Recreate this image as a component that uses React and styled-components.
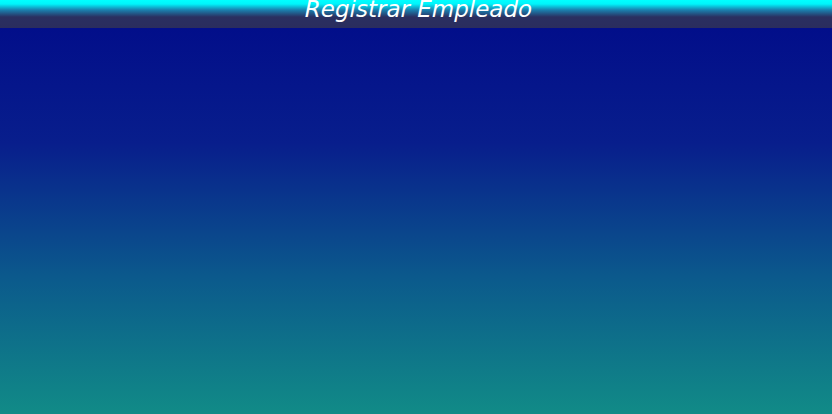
import React from 'react';
import styled, { createGlobalStyle } from 'styled-components';

const GlobalStyle = createGlobalStyle`
  html, body {
    margin: 0;
    padding: 0;
    height: 100%;
  }
  #root {
    height: 100%;
  }
`;

function App() {
  return (
    <>
      <GlobalStyle />
      <Page>
        <Header>
          <Title>Registrar Empleado</Title>
        </Header>
        <Content />
      </Page>
    </>
  );
}

const Page = styled.div`
  display: flex;
  flex-direction: column;
  height: 100vh;
  font-family: 'DejaVu Sans', sans-serif;
`;

const Header = styled.header`
  height: 28px;
  display: flex;
  justify-content: center;
  align-items: flex-start;
  overflow: hidden;
  background: linear-gradient(
    to bottom,
    #00ffff 0px,
    #00f4fb 4px,
    #1a7fae 10px,
    #2a2f60 17px,
    #2a2d5e 28px
  );
`;

const Title = styled.h1`
  margin: 0;
  margin-top: -5px;
  padding-left: 5px;
  font-size: 23px;
  font-weight: normal;
  font-style: italic;
  letter-spacing: 0px;
  color: #ffffff;
  line-height: 28px;
`;

const Content = styled.main`
  flex: 1;
  background: linear-gradient(
    to bottom,
    #020e8a 0%,
    #081e8c 30%,
    #0b5a8c 65%,
    #118b87 100%
  );
`;

export default App;
